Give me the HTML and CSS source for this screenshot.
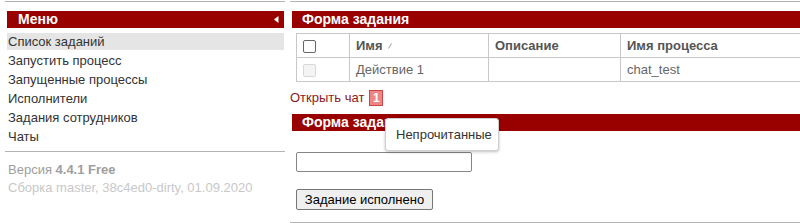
FILE: index.html
```html
<!DOCTYPE html>
<html lang="ru">
<head>
<meta charset="utf-8">
<link rel="stylesheet" href="styles.css">
</head>
<body>
<div class="page">
  <aside class="left">
    <div class="hdr menu-hdr"><span>Меню</span><svg class="tri" width="5" height="7" viewBox="0 0 5 7"><path d="M4.5 0 L0 3.5 L4.5 7 Z" fill="#fff"/></svg></div>
    <ul class="menu">
      <li class="active">Список заданий</li>
      <li>Запустить процесс</li>
      <li>Запущенные процессы</li>
      <li>Исполнители</li>
      <li>Задания сотрудников</li>
      <li>Чаты</li>
    </ul>
    <div class="version">
      <div class="ver">Версия <b>4.4.1 Free</b></div>
      <div class="build">Сборка master, 38c4ed0-dirty, 01.09.2020</div>
    </div>
  </aside>
  <main class="right">
    <div class="hdr">Форма задания</div>
    <table class="grid">
      <tr class="head">
        <th class="c1"><span class="cb"></span></th>
        <th class="c2">Имя <svg class="sort" width="4" height="6" viewBox="0 0 4 6"><path d="M3.5 0.5 L0.5 5.5" stroke="#999" stroke-width="1"/></svg></th>
        <th class="c3">Описание</th>
        <th class="c4">Имя процесса</th>
      </tr>
      <tr>
        <td class="c1"><span class="cb dis"></span></td>
        <td>Действие 1</td>
        <td></td>
        <td>chat_test</td>
      </tr>
    </table>
    <div class="chat"><span class="link">Открыть чат</span><span class="badge">1</span></div>
    <div class="hdr second">Форма задания</div>
    <div class="tooltip">Непрочитанные</div>
    <div class="field"><input type="text" class="inp"></div>
    <div class="actions"><button class="btn">Задание исполнено</button></div>
    <div class="bottom-line"></div>
  </main>
</div>
</body>
</html>
```
FILE: styles.css
```css
html, body { margin: 0; padding: 0; background: #fff; }
body { font-family: "Liberation Sans", Arial, sans-serif; font-size: 13px; color: #333; overflow: hidden; width: 800px; height: 223px; }
.page { display: flex; padding: 1px 0 0 5px; gap: 5px; }
.left { width: 280px; flex: none; border-top: 1px solid #b3b3b3; }
.right { flex: 1; min-width: 0; border-top: 1px solid #b3b3b3; position: relative; }
.hdr { background: #990000; color: #fff; font-weight: bold; font-size: 14px; height: 17px; line-height: 17px; margin-top: 9px; padding-left: 10px; white-space: nowrap; }
.menu-hdr { margin-left: 2px; margin-right: 1px; padding-left: 11px; display: flex; align-items: center; justify-content: space-between; padding-right: 5px; }
.tri { display: block; }
.menu { list-style: none; margin: 5px 0 0 2px; padding: 0; }
.menu li { height: 17px; line-height: 17px; margin-bottom: 2px; padding-left: 1px; margin-right: 1px; color: #333; }
.menu li.active { background: #e5e5e5; }
.version { border-top: 1px solid #b3b3b3; margin-top: 6px; padding-top: 9px; padding-left: 3px; line-height: 18px; }
.ver { color: #9e9e9e; }
.ver b { color: #9e9e9e; }
.build { color: #c8c8c8; }
.right .hdr { margin-left: 2px; }
.grid { border-collapse: collapse; margin: 5px 0 0 6px; width: calc(100% - 5px); }
.grid th, .grid td { border: 1px solid #c8c8c8; height: 23px; padding: 0 0 0 6px; text-align: left; color: #666; font-size: 13px; }
.grid th { font-weight: bold; color: #555; }
.grid .c1 { width: 46px; padding-left: 6px; }
.grid .c2 { width: 132px; }
.grid .c3 { width: 125px; }
.cb { display: inline-block; width: 11px; height: 11px; border: 1px solid #666; border-radius: 2px; vertical-align: middle; background: #fff; }
.cb.dis { border-color: #d8d8d8; background: #f4f4f4; }
.sort { vertical-align: 1px; margin-left: 2px; }
.chat { margin-top: 8px; height: 16px; line-height: 16px; display: flex; align-items: center; gap: 5px; }
.link { color: #8b1a1a; }
.badge { display: inline-block; width: 12px; height: 14px; line-height: 14px; background: #ef8585; border: 1px solid #cc4444; color: #fff; text-align: center; font-size: 12px; font-weight: bold; }
.second { margin-top: 8px; }
.tooltip { position: absolute; left: 95px; top: 116px; width: 102px; height: 31px; line-height: 31px; padding-left: 10px; background: #fff; border: 1px solid #cfcfcf; border-radius: 3px; box-shadow: 0 1px 3px rgba(0,0,0,0.25); color: #333; font-size: 13px; }
.field { margin-top: 21px; padding-left: 6px; }
.inp { display: block; box-sizing: border-box; width: 176px; height: 20px; border: 1px solid #858585; border-radius: 2px; margin: 0; padding: 0 3px; }
.actions { margin-top: 17px; padding-left: 6px; }
.btn { display: block; box-sizing: border-box; height: 21px; width: 137px; padding: 0; font-family: "Liberation Sans", Arial, sans-serif; font-size: 13px; color: #000; background: #efefef; border: 1px solid #767676; border-radius: 2px; }
.bottom-line { margin-top: 12px; border-top: 1px solid #b3b3b3; }
```
